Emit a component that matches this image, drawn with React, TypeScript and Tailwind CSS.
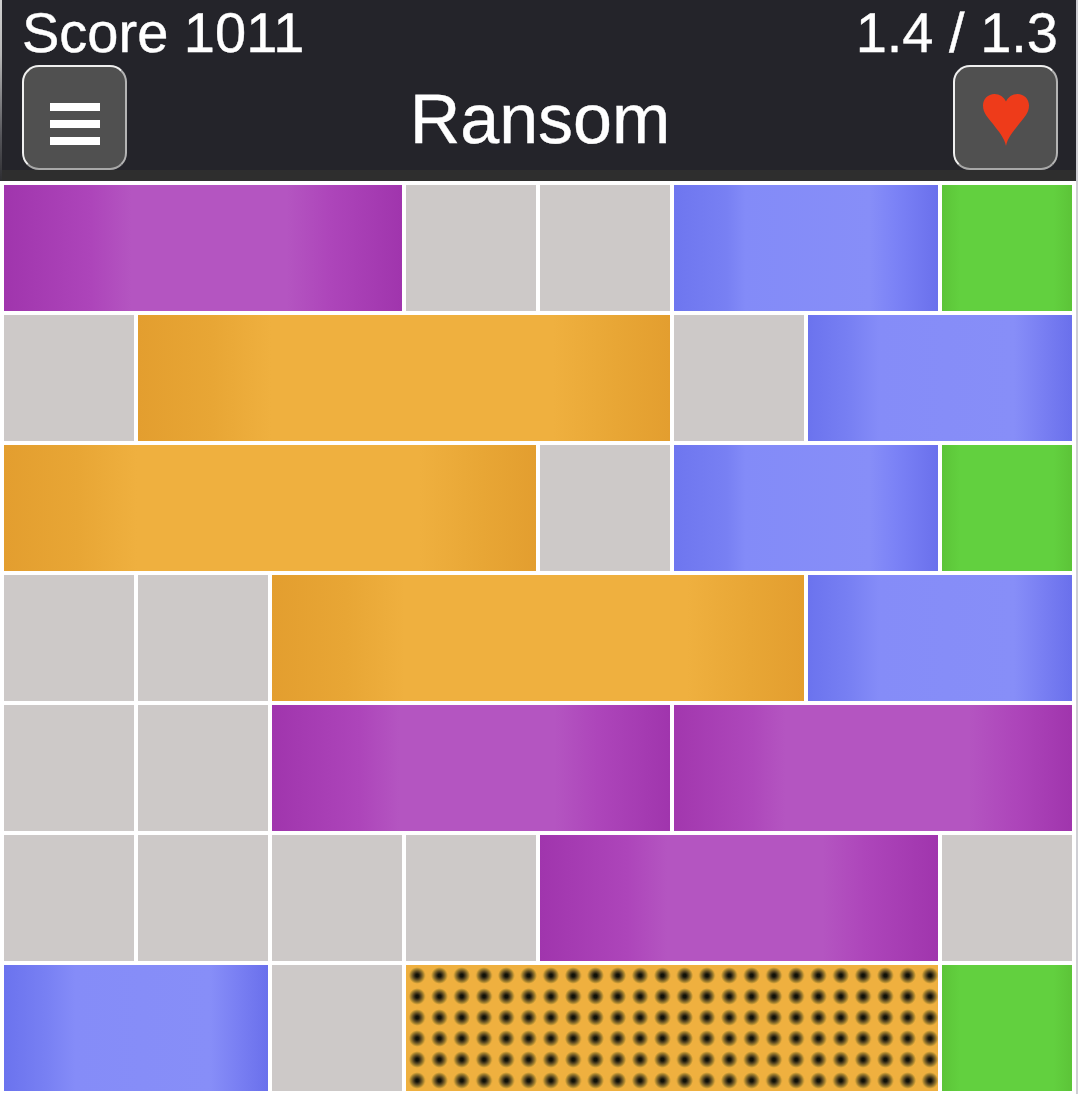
const font = { fontFamily: '"Liberation Sans", Arial, sans-serif' };

type Cell = { c: string; s: number };
const g = (): Cell => ({ c: "bg-[#cdc9c8]", s: 1 });
const P1 = "bg-[linear-gradient(90deg,#a035ad_0%,#ad45ba_22%,#b455c1_32%,#b455c1_71%,#ad45ba_82%,#a035ad_100%)]";
const P2 = "bg-[linear-gradient(90deg,#a237ae_0%,#ae48bb_20%,#b455c1_28%,#b455c1_74%,#ad45ba_86%,#a035ad_100%)]";
const O1 = "bg-[linear-gradient(90deg,#e39e2f_0%,#e8a635_14%,#efb03f_25%,#efb03f_78%,#e8a635_90%,#e39e2f_100%)]";
const B1 = "bg-[linear-gradient(90deg,#6e76ef_0%,#7880f3_20%,#838bf8_27%,#878ef8_74%,#7b82f6_84%,#6a70ec_100%)]";
const B2 = "bg-[linear-gradient(90deg,#6b73ee_0%,#7880f3_16%,#858cf8_27%,#878ef8_78%,#7a80f3_88%,#6a70ec_100%)]";
const G1 = "bg-[linear-gradient(90deg,#5cc438_0%,#62d03f_14%,#62d03f_86%,#5cc438_100%)]";
const DOT = "bg-[#efb03f] bg-[radial-gradient(circle,#111108_0px,#111108_1.5px,#5a4822_4px,#a8852f_6.5px,#efb03f_8.3px)] bg-[length:22.3px_21px]";

const rows: Cell[][] = [
  [{ c: P1, s: 3 }, g(), g(), { c: B1, s: 2 }, { c: G1, s: 1 }],
  [g(), { c: O1, s: 4 }, g(), { c: B2, s: 2 }],
  [{ c: O1, s: 4 }, g(), { c: B1, s: 2 }, { c: G1, s: 1 }],
  [g(), g(), { c: O1, s: 4 }, { c: B2, s: 2 }],
  [g(), g(), { c: P1, s: 3 }, { c: P2, s: 3 }],
  [g(), g(), g(), g(), { c: P1, s: 3 }, g()],
  [{ c: B2, s: 2 }, g(), { c: DOT, s: 4 }, { c: G1, s: 1 }],
];
const spans: Record<number, string> = { 1: "col-span-1", 2: "col-span-2", 3: "col-span-3", 4: "col-span-4" };

function IconButton({ children }: { children: React.ReactNode }) {
  return (
    <div className="flex h-[105px] w-[105px] items-center justify-center rounded-[17px] border-2 border-t-[#f0f0f0] border-l-[#f0f0f0] border-r-[#b4b4b4] border-b-[#a8a8a8] bg-[#505050]">
      {children}
    </div>
  );
}

export default function App() {
  return (
    <div className="flex h-[1094px] w-[1078px] overflow-hidden bg-white [text-rendering:geometricPrecision]" style={font}>
      <div className="w-[1076px]">
        <div className="flex h-[181px] bg-[#24242a]">
          <div className="h-full w-[2px] bg-[linear-gradient(180deg,#d0d0d0_0%,#b8b8b8_30%,#55555a_75%,#2e2e32_100%)]" />
          <div className="flex-1">
            <div className="h-[170px] pl-[20px] pr-[18px]">
              <div className="flex h-[65px] items-center justify-between text-[56px] leading-[65px] text-white [-webkit-text-stroke:0.4px_white]">
                <span>Score 1011</span>
                <span>1.4 / 1.3</span>
              </div>
              <div className="flex h-[105px] items-center justify-between">
                <IconButton>
                  <div className="mt-[12px] flex w-[50px] flex-col gap-[9px]">
                    <div className="h-[8px] bg-white" />
                    <div className="h-[8px] bg-white" />
                    <div className="h-[8px] bg-white" />
                  </div>
                </IconButton>
                <div className="pt-[3px] text-[70px] leading-[105px] text-white [-webkit-text-stroke:0.4px_white]">Ransom</div>
                <IconButton>
                  <svg className="mt-[4px]" width="46" height="52" viewBox="0 0 46 52">
                    <path
                      d="M23 52C21.5 44 16 38 10 30C5 23.5 0 19 0 11.5C0 5 5 0 11.5 0C16.5 0 21 3 23 7.5C25 3 29.5 0 34.5 0C41 0 46 5 46 11.5C46 19 41 23.5 36 30C30 38 24.5 44 23 52Z"
                      fill="#ee3b1a"
                    />
                  </svg>
                </IconButton>
              </div>
            </div>
            <div className="h-[11px] bg-[#2e2e2e]" />
          </div>
        </div>
        <div className="grid grid-cols-[repeat(8,130px)] grid-rows-[repeat(7,126px)] gap-[4px] pl-[4px] pt-[4px]">
          {rows.flat().map((cell, i) => (
            <div key={i} className={`${spans[cell.s]} ${cell.c}`} />
          ))}
        </div>
      </div>
      <div className="h-full w-[2px] bg-[#cfcfd4]" />
    </div>
  );
}
